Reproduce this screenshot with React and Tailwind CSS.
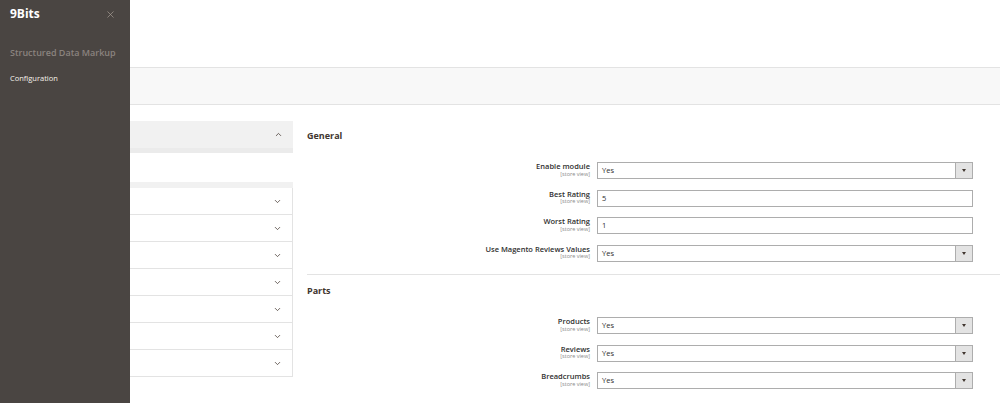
import { ChevronDown, ChevronUp, X } from 'lucide-react'

const font = { fontFamily: '"Open Sans", "Liberation Sans", sans-serif' }

const generalFields = [
  { label: 'Enable module', type: 'select', value: 'Yes' },
  { label: 'Best Rating', type: 'text', value: '5' },
  { label: 'Worst Rating', type: 'text', value: '1' },
  { label: 'Use Magento Reviews Values', type: 'select', value: 'Yes' },
]

const partsFields = [
  { label: 'Products', type: 'select', value: 'Yes' },
  { label: 'Reviews', type: 'select', value: 'Yes' },
  { label: 'Breadcrumbs', type: 'select', value: 'Yes' },
]

function Field({ field }) {
  return (
    <div className="flex items-center h-[27.5px]">
      <div className="w-[290px] pr-[7px] text-right leading-none -mt-[1px]">
        <div className="text-[7.5px] font-semibold text-[#303030]">{field.label}</div>
        <div className="text-[5.5px] text-[#8a8a8a] mt-[1px]">[store view]</div>
      </div>
      <div className="w-[376px] h-[17px] border border-[#adadad] bg-white flex items-center">
        <span className="flex-1 pl-[4px] text-[7.5px] leading-none text-[#303030]">{field.value}</span>
        {field.type === 'select' && (
          <div className="w-[17px] h-full bg-[#e3e3e3] border-l border-[#adadad] flex items-center justify-center">
            <span className="block w-0 h-0 border-l-[2.5px] border-r-[2.5px] border-t-[3px] border-l-transparent border-r-transparent border-t-[#41362f]" />
          </div>
        )}
      </div>
    </div>
  )
}

export default function App() {
  return (
    <div className="w-[1000px] h-[403px] overflow-hidden flex bg-white leading-none" style={font}>
      {/* slide-out menu */}
      <div className="w-[130px] shrink-0 h-full bg-[#4a4542] px-[10px] pt-[8px]">
        <div className="flex items-center justify-between h-[12px]">
          <div className="text-[12px] font-bold text-white">9Bits</div>
          <X className="w-[11px] h-[11px] text-[#a79d95] mr-[4px]" strokeWidth={1.5} />
        </div>
        <div className="mt-[28px] h-[11px] whitespace-nowrap text-[9px] font-semibold text-[#8a837f]">Structured Data Markup</div>
        <div className="mt-[16px] text-[7.5px] text-[#f7f3eb]">Configuration</div>
      </div>

      <div className="flex-1 flex flex-col">
        <div className="h-[67px]" />
        <div className="h-[38px] bg-[#f8f8f8] border-t border-b border-[#e3e3e3]" />

        <div className="flex flex-1">
          {/* left tabs */}
          <div className="w-[163px] shrink-0 pt-[16px]">
            <div className="h-[32px] bg-[#f1f1f1] border-b-[5px] border-[#ebebeb] flex items-center justify-end pr-[10px]">
              <ChevronUp className="w-[9px] h-[9px] text-[#41362f]" strokeWidth={2} />
            </div>
            <div className="h-[29px]" />
            <div className="h-[6px] bg-[#f1f1f1]" />
            {Array.from({ length: 7 }).map((_, i) => (
              <div key={i} className="h-[27px] border-b border-r border-[#e3e3e3] flex items-center justify-end pr-[10px]">
                <ChevronDown className="w-[9px] h-[9px] text-[#41362f]" strokeWidth={2} />
              </div>
            ))}
          </div>

          {/* config form */}
          <div className="flex-1 pl-[14px]">
            <div className="h-[52px] pt-[26px]">
              <div className="text-[9px] font-bold text-[#41362f]">General</div>
            </div>
            {generalFields.map((f) => (
              <Field key={f.label} field={f} />
            ))}
            <div className="mt-[7px] border-t border-[#e3e3e3]" />
            <div className="h-[37px] pt-[11px]">
              <div className="text-[9px] font-bold text-[#41362f]">Parts</div>
            </div>
            {partsFields.map((f) => (
              <Field key={f.label} field={f} />
            ))}
          </div>
        </div>
      </div>
    </div>
  )
}
